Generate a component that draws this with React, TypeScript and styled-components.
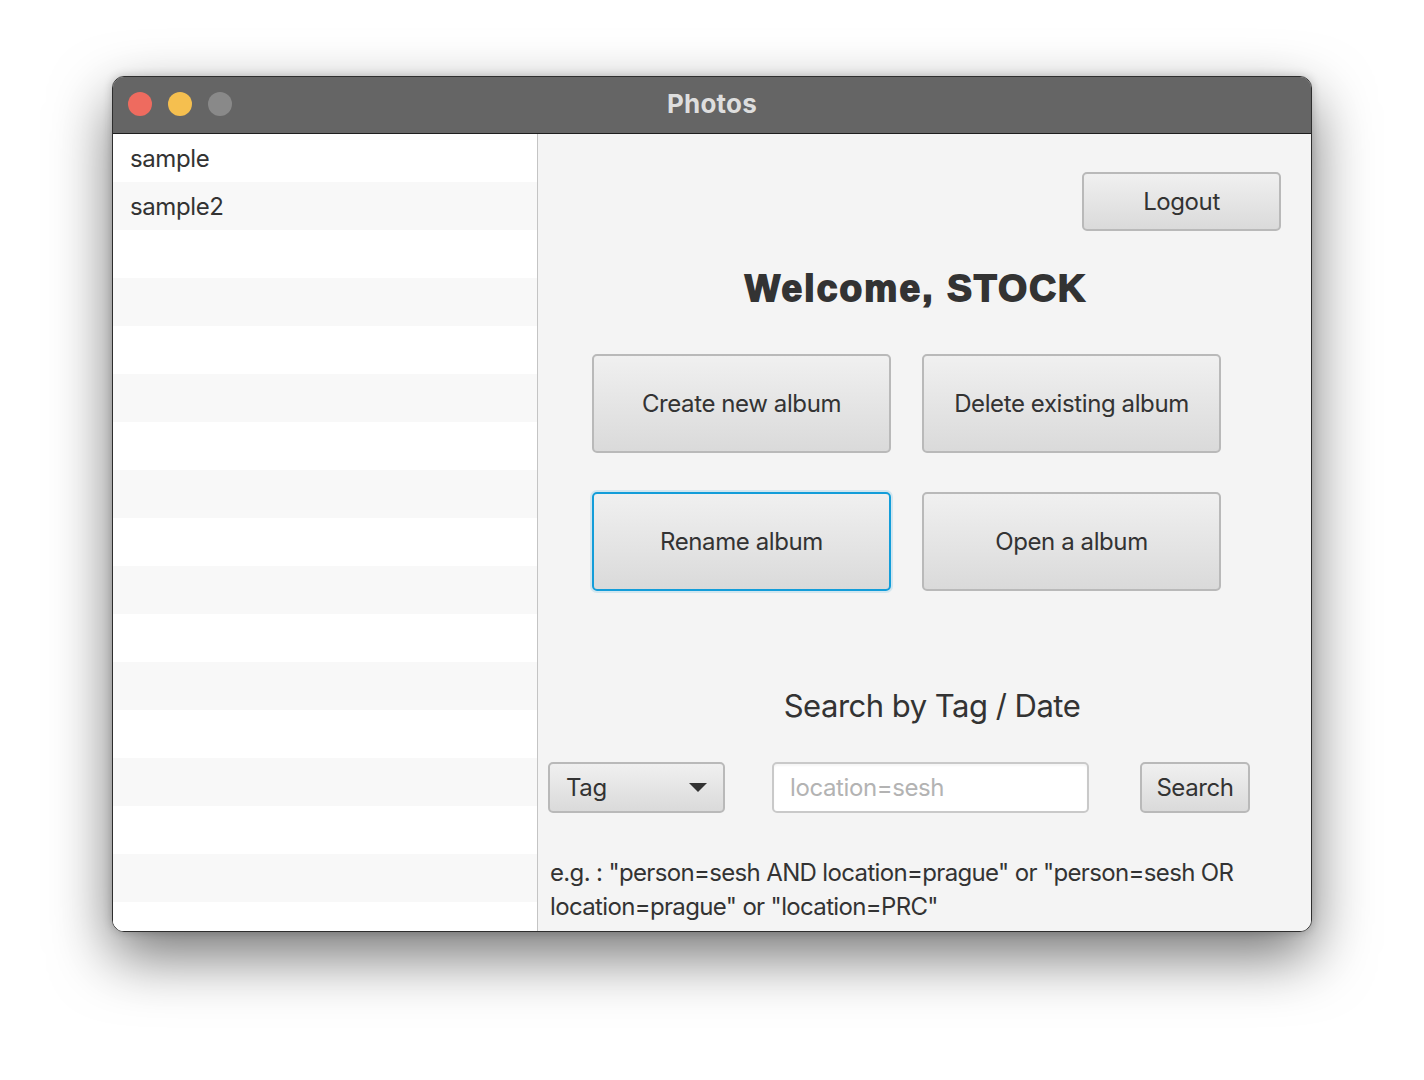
import React from "react";
import styled, { createGlobalStyle, css } from "styled-components";

const Global = createGlobalStyle`
  html, body { margin: 0; padding: 0; background: #ffffff; }
  body { font-family: Inter, "Noto Sans", "Liberation Sans", sans-serif; }
  * { box-sizing: border-box; }
`;

const Stage = styled.div`
  width: 1424px;
  height: 1080px;
  padding: 76px 0 0 112px;
  background: #ffffff;
`;

const Window = styled.div`
  width: 1200px;
  height: 856px;
  border-radius: 12px;
  border: 1px solid #2e2e2e;
  overflow: hidden;
  display: flex;
  flex-direction: column;
  box-shadow: 0 24px 60px rgba(0, 0, 0, 0.55), 0 0 10px rgba(0, 0, 0, 0.2);
  background: #f4f4f4;
`;

const TitleBar = styled.div`
  height: 57px;
  flex: none;
  background: #656565;
  border-bottom: 1px solid #1e1e1e;
  display: flex;
  align-items: center;
  position: relative;
  padding: 0 0 2px 15px;
  gap: 16px;
`;

const Light = styled.span<{ $c: string }>`
  width: 24px;
  height: 24px;
  border-radius: 50%;
  background: ${(p) => p.$c};
`;

const Title = styled.div`
  position: absolute;
  left: 0;
  right: 0;
  top: 0;
  bottom: 4px;
  display: flex;
  align-items: center;
  justify-content: center;
  color: #dedede;
  font-weight: 700;
  font-size: 26px;
  letter-spacing: 0.2px;
  pointer-events: none;
`;

const Body = styled.div`
  flex: 1;
  display: flex;
  min-height: 0;
`;

const List = styled.div`
  width: 425px;
  flex: none;
  background: #ffffff;
  border-right: 1px solid #c4c4c4;
  overflow: hidden;
`;

const Row = styled.div<{ $odd: boolean }>`
  height: 48px;
  display: flex;
  align-items: center;
  padding-left: 17px;
  font-size: 24px;
  color: #333333;
  letter-spacing: -0.4px;
  background: ${(p) => (p.$odd ? "#f8f8f8" : "#ffffff")};
`;

const Main = styled.div`
  flex: 1;
  display: flex;
  flex-direction: column;
  background: #f4f4f4;
`;

const buttonBase = css`
  background: linear-gradient(#f0f0f0, #dadada);
  border: 2px solid #b9b9b9;
  border-radius: 5px;
  color: #333333;
  font-family: Inter, "Noto Sans", "Liberation Sans", sans-serif;
  font-size: 24px;
  letter-spacing: -0.4px;
  display: flex;
  align-items: center;
  justify-content: center;
  padding: 0;
`;

const LogoutButton = styled.button`
  ${buttonBase};
  align-self: flex-end;
  margin: 38px 30px 0 0;
  width: 199px;
  height: 59px;
`;

const Welcome = styled.h1`
  margin: 37px 0 0 0;
  padding-right: 17px;
  text-align: center;
  font-family: "Liberation Sans", Arial, sans-serif;
  font-weight: 700;
  font-size: 37px;
  line-height: 42px;
  letter-spacing: 2.2px;
  color: #333333;
  -webkit-text-stroke: 1.8px #333333;
`;

const ActionGrid = styled.div`
  display: grid;
  grid-template-columns: 299px 299px;
  grid-auto-rows: 99px;
  column-gap: 31px;
  row-gap: 39px;
  margin: 44px 0 0 54px;
`;

const ActionButton = styled.button<{ $focused?: boolean }>`
  ${buttonBase};
  ${(p) =>
    p.$focused &&
    css`
      border-color: #139dd9;
      box-shadow: 0 0 0 2px rgba(19, 157, 217, 0.15);
    `}
`;

const SearchTitle = styled.div`
  margin-top: 94px;
  padding-left: 15px;
  text-align: center;
  font-size: 31px;
  line-height: 42px;
  letter-spacing: -0.5px;
  color: #333333;
`;

const SearchRow = styled.div`
  display: flex;
  align-items: center;
  margin: 35px 0 0 10px;
  height: 51px;
`;

const Combo = styled.div`
  ${buttonBase};
  width: 177px;
  height: 51px;
  justify-content: space-between;
  padding: 0 16px 0 16px;
`;

const Arrow = styled.span`
  width: 0;
  height: 0;
  border-left: 9px solid transparent;
  border-right: 9px solid transparent;
  border-top: 9px solid #333333;
`;

const Field = styled.input`
  margin-left: 47px;
  width: 317px;
  height: 51px;
  border: 2px solid #c9c9c9;
  border-radius: 5px;
  background: #ffffff;
  box-shadow: inset 0 2px 2px rgba(0, 0, 0, 0.04);
  padding: 0 16px;
  font-family: Inter, "Noto Sans", "Liberation Sans", sans-serif;
  font-size: 24px;
  letter-spacing: -0.4px;
  color: #333333;
  outline: none;
  &::placeholder { color: #b3b3b3; }
`;

const SearchButton = styled.button`
  ${buttonBase};
  margin-left: 51px;
  width: 110px;
  height: 51px;
`;

const Hint = styled.p`
  margin: 43px 0 0 12px;
  font-size: 24px;
  line-height: 34px;
  letter-spacing: -0.65px;
  color: #333333;
`;

const rows = ["sample", "sample2"];

export default function App() {
  return (
    <>
      <Global />
      <Stage>
        <Window>
          <TitleBar>
            <Light $c="#ee6b5f" />
            <Light $c="#f5bf4f" />
            <Light $c="#898989" />
            <Title>Photos</Title>
          </TitleBar>
          <Body>
            <List>
              {Array.from({ length: 17 }).map((_, i) => (
                <Row key={i} $odd={i % 2 === 1}>
                  {rows[i] ?? ""}
                </Row>
              ))}
            </List>
            <Main>
              <LogoutButton>Logout</LogoutButton>
              <Welcome>Welcome, STOCK</Welcome>
              <ActionGrid>
                <ActionButton>Create new album</ActionButton>
                <ActionButton>Delete existing album</ActionButton>
                <ActionButton $focused>Rename album</ActionButton>
                <ActionButton>Open a album</ActionButton>
              </ActionGrid>
              <SearchTitle>Search by Tag / Date</SearchTitle>
              <SearchRow>
                <Combo>
                  <span>Tag</span>
                  <Arrow />
                </Combo>
                <Field placeholder="location=sesh" />
                <SearchButton>Search</SearchButton>
              </SearchRow>
              <Hint>
                e.g. : "person=sesh AND location=prague" or "person=sesh OR
                <br />
                location=prague" or "location=PRC"
              </Hint>
            </Main>
          </Body>
        </Window>
      </Stage>
    </>
  );
}
